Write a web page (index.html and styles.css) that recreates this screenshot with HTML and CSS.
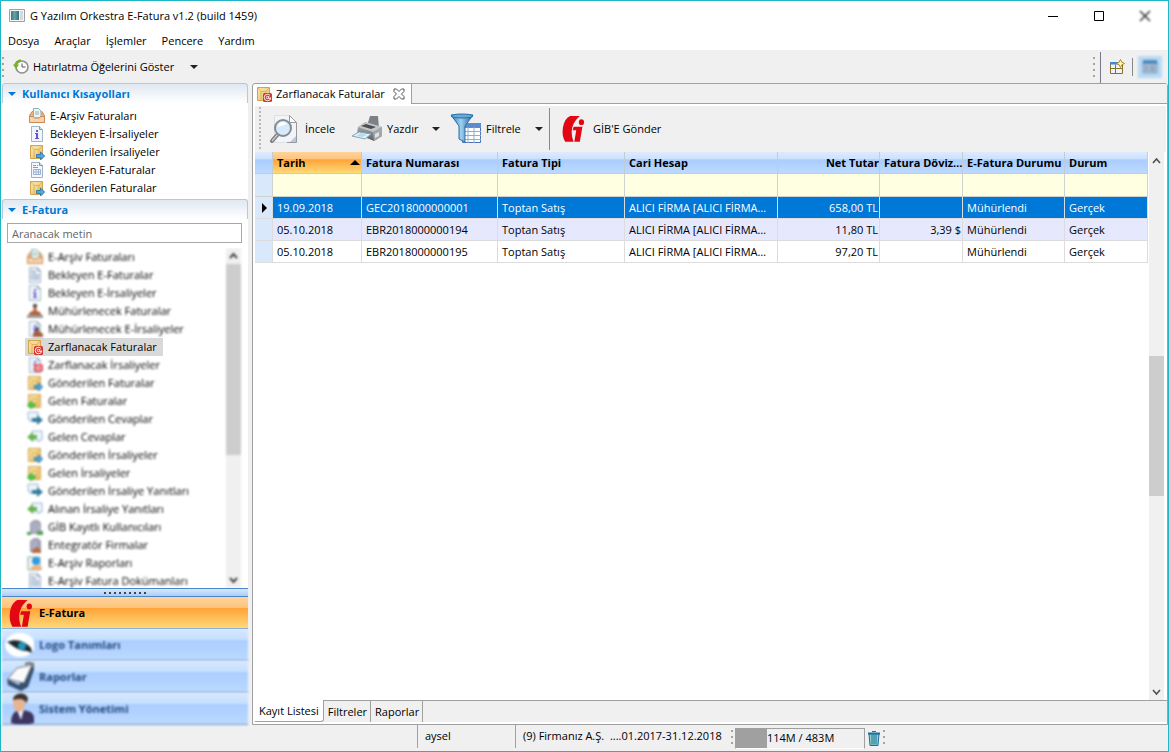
FILE: index.html
```html
<!DOCTYPE html>
<html lang="tr">
<head>
<meta charset="utf-8">
<title>G Yazılım Orkestra E-Fatura v1.2 (build 1459)</title>
<link rel="stylesheet" href="styles.css">
</head>
<body>
<svg class="defs" aria-hidden="true">
  <defs>
    <linearGradient id="gold" x1="0" y1="0" x2="1" y2="1"><stop offset="0" stop-color="#fbe7a8"/><stop offset="1" stop-color="#e8c068"/></linearGradient>
    <linearGradient id="funnel" x1="0" y1="0" x2="1" y2="0"><stop offset="0" stop-color="#2f78b8"/><stop offset=".45" stop-color="#9fd0ee"/><stop offset="1" stop-color="#1d5f9f"/></linearGradient>
    <linearGradient id="steel" x1="0" y1="0" x2="0" y2="1"><stop offset="0" stop-color="#b9bcc0"/><stop offset="1" stop-color="#5c6066"/></linearGradient>
    <symbol id="box" viewBox="0 0 16 16"><path d="M.5 7.500 3 3.500h10l2.500 4v7H.5z" fill="#e9b182" stroke="#c98a58"/><path d="M4.500.5h5l2.500 2.500V10H4.500z" fill="#eef6f4" stroke="#8fb0ae"/><path d="M6 4h4M6 6h4" stroke="#8fb0ae"/><path d="M.5 8.500h4L5.500 10h5l1-1.500h4v6H.5z" fill="#f6d3ac" stroke="#c98a58"/></symbol>
    <symbol id="info" viewBox="0 0 16 16"><path d="M2.500.5h8l3 3v12h-11z" fill="#f0f6fb" stroke="#9fb8c2"/><path d="M10.500.5v3h3" fill="#c9dfe6" stroke="#7f9fae"/><path d="M7 4h2v2H7zM6 7h3v5h1v1H6v-1h1V8H6z" fill="#6650d0"/></symbol>
    <symbol id="form" viewBox="0 0 16 16"><path d="M2.500.5h8l3 3v12h-11z" fill="#f4f8fc" stroke="#9fb0c6"/><path d="M10.500.5v3h3" fill="#d5e0ee" stroke="#7f93b0"/><path d="M4 3.500h3M8 3.500h1M4 5.500h5" stroke="#8599b8"/><path d="M4.500 7.500h7v5h-7zM4.500 10h7M7 7.500v5M9.500 7.500v5" fill="none" stroke="#9db2d0"/></symbol>
    <symbol id="env" viewBox="0 0 16 16"><path d="M1.500 1.500h12v13h-12z" fill="url(#gold)" stroke="#d3a450"/><path d="M1.500 1.500 5 5.500h5l3.500-4M5 5.500V14M10 5.500V14" fill="none" stroke="#cfa04a" stroke-width=".6"/></symbol>
    <symbol id="envout" viewBox="0 0 16 16"><use href="#env"/><path d="M7.500 10.500h4V8l4.200 4-4.200 4v-2.500h-4z" fill="#4ba9e4" stroke="#1d6faa" stroke-width=".8"/></symbol>
    <symbol id="envin" viewBox="0 0 16 16"><use href="#env"/><path d="M8 10.500H4.500V8L.3 12l4.200 4v-2.500H8z" fill="#45cf45" stroke="#2c9a2c" stroke-width=".6"/></symbol>
    <symbol id="envat" viewBox="0 0 16 16"><use href="#env"/><rect x="7" y="7" width="9" height="9" rx="1.500" fill="#d9342c"/><circle cx="11.500" cy="11.500" r="3.300" fill="none" stroke="#fff" stroke-width=".9" stroke-dasharray="18 3"/><circle cx="11.500" cy="11.500" r="1.200" fill="none" stroke="#fff" stroke-width=".9"/><path d="M12.800 10v2.500h1.500" fill="none" stroke="#fff" stroke-width=".8"/></symbol>
    <symbol id="stamp" viewBox="0 0 16 16"><path d="M6 1h4v3l-1 3 5 3v2H2v-2l5-3-1-3z" fill="#b5623b"/><path d="M6 1h4v3H6z" fill="#555"/><path d="M0 12h16v3H0z" fill="#9a9a9a"/></symbol>
    <symbol id="docstamp" viewBox="0 0 16 16"><use href="#info"/><path d="M9 6h3v4l4 3v3H6v-3l3-3z" fill="#a5603f"/><path d="M9 6h3v3H9z" fill="#555"/></symbol>
    <symbol id="docat" viewBox="0 0 16 16"><use href="#info"/><rect x="7" y="7" width="9" height="8" rx="2" fill="#e2555c"/><circle cx="11.500" cy="11" r="2" fill="none" stroke="#fff"/></symbol>
    <symbol id="replyout" viewBox="0 0 16 16"><path d="M1 1h10v7H5l-2 3V8H1z" fill="#eef5fb" stroke="#9bbad6"/><path d="M5 7h5V4l6 5-6 5v-3H5z" fill="#347c9c"/></symbol>
    <symbol id="replyin" viewBox="0 0 16 16"><path d="M5 2h10v9h-3v2l-2-2H5z" fill="#eef5fb" stroke="#9bbad6"/><path d="M10 6H6V3L0 8l6 5v-3h4z" fill="#66b34e"/></symbol>
    <symbol id="city" viewBox="0 0 16 16"><path d="M3 15V4l4-3h4l3 3v11z" fill="#9f9fb5"/><path d="M6 4v10M9 3v11M12 5v9" stroke="#c9c9d8"/><path d="M0 13h4v3H0zM10 12h6v4h-6z" fill="#58a058"/></symbol>
    <symbol id="firm" viewBox="0 0 16 16"><path d="M3 15V4l4-3h4l3 3v11z" fill="#9f9fb5"/><path d="M6 4v10M9 3v11" stroke="#c9c9d8"/><path d="M5 16v-3l5-3 4 3v3z" fill="#b56b45"/></symbol>
    <symbol id="report" viewBox="0 0 16 16"><path d="M1 2h12v13H1z" fill="#eef5f2" stroke="#87a79d"/><circle cx="9" cy="6" r="4" fill="#2f9be0"/><path d="M4 15v-3l5-2 6 2v3z" fill="#eeb37d"/></symbol>
    <symbol id="gib" viewBox="0 0 66 80"><path d="M24 0h30C38 14 30 30 29 48c0 12 2 22 6 31H9C2 68-1 52 2 35 5 18 12 6 24 0z" fill="#e30613"/><path d="M35 33h27l-8 46H37l6-35H32z" fill="#e30613"/><ellipse cx="59" cy="19" rx="8" ry="9" fill="#e30613"/></symbol>
  </defs>
</svg>
<div class="window">
  <header class="titlebar">
    <svg class="i16" viewBox="0 0 16 16"><path d="M.5 1.500h15v12H.5z" fill="#f4f6f8" stroke="#9aa0a5"/><path d="M2 3h8v9H2z" fill="url(#funnel)"/><path d="M2 3h8v9H2z" fill="#3c8064" opacity=".55"/><path d="M11 3h3v9h-3z" fill="#d6d9dc"/></svg>
    <h1>G Yazılım Orkestra E-Fatura v1.2 (build 1459)</h1>
    <div class="winbtns">
      <button aria-label="Simge durumuna küçült"><svg viewBox="0 0 12 12"><path d="M1 6.500h10" stroke="#000"/></svg></button>
      <button aria-label="Ekranı kapla"><svg viewBox="0 0 12 12"><path d="M1.500 1.500h9v9h-9z" fill="none" stroke="#000"/></svg></button>
      <button class="soft" aria-label="Kapat"><svg viewBox="0 0 12 12"><path d="m1 1 10 10M11 1 1 11" stroke="#333" stroke-width="1.500"/></svg></button>
    </div>
  </header>
  <nav class="menubar"><button>Dosya</button><button>Araçlar</button><button>İşlemler</button><button>Pencere</button><button>Yardım</button></nav>
  <div class="coolbar">
    <span class="grip"></span>
    <button class="remind">
      <svg class="i16" viewBox="0 0 16 16"><circle cx="9" cy="8" r="6" fill="#fbfbfb" stroke="#8d8d8d" stroke-width="1.600"/><path d="M9 4.500V8h3.500" fill="none" stroke="#555"/><path d="M8 1.200A7 7 0 0 0 2 7" fill="none" stroke="#74b51c" stroke-width="2"/><path d="M0 5.500h6L3 10z" fill="#74b51c"/></svg>
      Hatırlatma Öğelerini Göster <span class="caret"></span>
    </button>
    <div class="perspectives">
      <span class="grip"></span><span class="edge"></span>
      <button aria-label="Perspektif aç"><svg class="i16" viewBox="0 0 16 16"><path d="M1.500 3.500h12v11h-12z" fill="#eef3fb" stroke="#85702e"/><path d="M1 3h9v2.500H1z" fill="#4a86cc"/><path d="M1.500 9.500h12M6.500 5.500v9" stroke="#85702e"/><path d="m11.500.5 1.300 2.700 2.700 1.300-2.700 1.300-1.300 2.700-1.300-2.700-2.700-1.300 2.700-1.300z" fill="#fff5bf" stroke="#b08a24"/></svg></button>
      <span class="bar"></span>
      <button class="active soft" aria-label="E-Fatura perspektifi"><svg class="i16" viewBox="0 0 16 16"><path d="M1 2h14v12H1z" fill="#a9bdd2" stroke="#7f9dbd"/><path d="M1 1h14v4H1z" fill="#4f8abc"/><path d="M3 8h3M3 11h3M8 8h5M8 11h5" stroke="#7d96b2" stroke-width="1.500"/></svg></button>
    </div>
  </div>
  <div class="work">
    <aside class="side">
      <section>
        <h2><span class="twist"></span>Kullanıcı Kısayolları</h2>
        <ul class="short">
          <li><svg class="i16"><use href="#box"/></svg>E-Arşiv Faturaları</li>
          <li><svg class="i16"><use href="#info"/></svg>Bekleyen E-İrsaliyeler</li>
          <li><svg class="i16"><use href="#envout"/></svg>Gönderilen İrsaliyeler</li>
          <li><svg class="i16"><use href="#form"/></svg>Bekleyen E-Faturalar</li>
          <li><svg class="i16"><use href="#envout"/></svg>Gönderilen Faturalar</li>
        </ul>
      </section>
      <section class="tree-section">
        <h2><span class="twist"></span>E-Fatura</h2>
        <input class="search" type="text" placeholder="Aranacak metin" aria-label="Aranacak metin">
        <div class="treewrap">
          <ul class="tree">
            <li><svg class="i16"><use href="#box"/></svg><span>E-Arşiv Faturaları</span></li>
            <li><svg class="i16"><use href="#form"/></svg><span>Bekleyen E-Faturalar</span></li>
            <li><svg class="i16"><use href="#info"/></svg><span>Bekleyen E-İrsaliyeler</span></li>
            <li><svg class="i16"><use href="#stamp"/></svg><span>Mühürlenecek Faturalar</span></li>
            <li><svg class="i16"><use href="#docstamp"/></svg><span>Mühürlenecek E-İrsaliyeler</span></li>
            <li class="selected"><svg class="i16"><use href="#envat"/></svg><span>Zarflanacak Faturalar</span></li>
            <li><svg class="i16"><use href="#docat"/></svg><span>Zarflanacak İrsaliyeler</span></li>
            <li><svg class="i16"><use href="#envout"/></svg><span>Gönderilen Faturalar</span></li>
            <li><svg class="i16"><use href="#envin"/></svg><span>Gelen Faturalar</span></li>
            <li><svg class="i16"><use href="#replyout"/></svg><span>Gönderilen Cevaplar</span></li>
            <li><svg class="i16"><use href="#replyin"/></svg><span>Gelen Cevaplar</span></li>
            <li><svg class="i16"><use href="#envout"/></svg><span>Gönderilen İrsaliyeler</span></li>
            <li><svg class="i16"><use href="#envin"/></svg><span>Gelen İrsaliyeler</span></li>
            <li><svg class="i16"><use href="#replyout"/></svg><span>Gönderilen İrsaliye Yanıtları</span></li>
            <li><svg class="i16"><use href="#replyin"/></svg><span>Alınan İrsaliye Yanıtları</span></li>
            <li><svg class="i16"><use href="#city"/></svg><span>GİB Kayıtlı Kullanıcıları</span></li>
            <li><svg class="i16"><use href="#firm"/></svg><span>Entegratör Firmalar</span></li>
            <li><svg class="i16"><use href="#report"/></svg><span>E-Arşiv Raporları</span></li>
            <li><svg class="i16"><use href="#form"/></svg><span>E-Arşiv Fatura Dokümanları</span></li>
          </ul>
          <div class="scroll soft">
            <svg viewBox="0 0 15 16"><path d="m4 10 3.500-4L11 10" fill="none" stroke="#444" stroke-width="2"/></svg>
            <div class="track"><div class="thumb side-thumb"></div></div>
            <svg viewBox="0 0 15 16"><path d="m4 6 3.500 4L11 6" fill="none" stroke="#444" stroke-width="2"/></svg>
          </div>
        </div>
      </section>
      <div class="sash"><i></i><i></i><i></i><i></i><i></i><i></i><i></i><i></i><i></i></div>
      <nav class="modules">
        <button class="current"><svg class="i32" viewBox="0 0 32 32"><use href="#gib" x="7" y="3" width="23" height="27"/></svg>E-Fatura</button>
        <button class="other"><svg class="i32" viewBox="0 0 32 32"><ellipse cx="18" cy="16" rx="15" ry="12" fill="#fff"/><path d="M5 13c9-4 18-1 24 6l1 5-5-2c-8 0-11-3-20-9z" fill="#1b2730"/><circle cx="20" cy="17" r="4" fill="#2196b8"/></svg>Logo Tanımları</button>
        <button class="other"><svg class="i32" viewBox="0 0 32 32"><path d="m5 18 12 6L28 5l5 1-7 20-7 4L6 24z" fill="#35506f"/><path d="M15 7l15-3-8 18-16-4z" fill="#fafafa" stroke="#777"/><path d="m23 3 4-1 5 1-1 4" fill="none" stroke="#666" stroke-width="2"/></svg>Raporlar</button>
        <button class="other"><svg class="i32" viewBox="0 0 32 32"><path d="M9 30c0-9 4-13 10-13s13 2 13 8v5c-8 2-16 2-23 0z" fill="#3c3660"/><path d="m15 17 4 10 3-11z" fill="#eef"/><ellipse cx="17" cy="10" rx="6" ry="9" fill="#e8b490"/><path d="M11 7c0-8 14-9 15-1l-2 5c0-5-6-6-13-4z" fill="#3a332e"/></svg>Sistem Yönetimi</button>
      </nav>
    </aside>
    <main class="editor">
      <div class="tabs">
        <div class="tab"><svg class="i16"><use href="#envat"/></svg><span>Zarflanacak Faturalar</span>
          <button aria-label="Sekmeyi kapat"><svg viewBox="0 0 12 12"><path d="M1 1h2.500L6 3.500 8.500 1H11v2.500L8.500 6 11 8.500V11H8.500L6 8.500 3.500 11H1V8.500L3.500 6 1 3.500z" fill="#fff" stroke="#555"/></svg></button></div>
        <div class="tabrest"></div>
      </div>
      <div class="toolbar">
        <span class="grip tall"></span>
        <button class="t-view"><svg class="i32" viewBox="0 0 32 32"><path d="M5.500 2.500h15l7 7v20h-22z" fill="#f2f4f8" stroke="#dcdfe3"/><path d="M27.500 9.500v20H18" fill="none" stroke="#999"/><path d="M20.500 2.500v7h7z" fill="#fff" stroke="#999"/><path d="m27 23-6 6h6z" fill="#b5c5f5"/><path d="M9 21 3 28" stroke="#777" stroke-width="4" stroke-linecap="round"/><path d="M9 21 3 28" stroke="#ccc" stroke-width="1.500"/><circle cx="14" cy="15" r="8" fill="#d5ebfb" stroke="#858b93" stroke-width="2"/><path d="M9 14a5 5 0 0 1 9-3z" fill="#fff"/></svg>İncele</button>
        <button class="t-print"><svg class="i32" viewBox="0 0 32 32"><path d="m16 13 3-10h8l1 12z" fill="#7d8186"/><path d="m7 14 7-5 17 5v9l-8 5L6 21z" fill="url(#steel)"/><path d="m7 14 7-5 17 5-9 5z" fill="#c4c7ca"/><path d="m10 13 5-2 10 3-5 2z" fill="#4c4f54"/><path d="m22 19 9-5v9l-8 5z" fill="#a3a7ab"/><path d="m24 21 4-2v4l-4 2z" fill="#dfe2e5"/><path d="m1 23 7-4 12 2-6 5z" fill="#e2f3fb" stroke="#8aa3b0"/><path d="m5 23 5-3 6 2-4 2z" fill="#b4dcee"/></svg>Yazdır</button>
        <button class="drop" aria-label="Yazdır seçenekleri"><span class="caret"></span></button>
        <button class="t-filter"><svg class="i32" viewBox="0 0 32 32"><path d="M12.500 10.500h18v19h-18z" fill="#fff" stroke="#4d74b8"/><path d="M12 10h19v5H12z" fill="#5c8bd0"/><path d="M12 18.500h19M12 22.500h19M12 26.500h19M18 14v16M24 14v16" stroke="#8fabd6"/><path d="M1 2h22l-8 11v16l-6-3V13z" fill="url(#funnel)" stroke="#286fa8"/><ellipse cx="12" cy="3" rx="11" ry="2" fill="#68a9d6" stroke="#286fa8"/></svg>Filtrele</button>
        <button class="drop" aria-label="Filtre seçenekleri"><span class="caret"></span></button>
        <span class="bar"></span>
        <button class="t-send"><svg class="i32" viewBox="0 0 32 32"><use href="#gib" x="4" y="3" width="24" height="26"/></svg>GİB'E Gönder</button>
      </div>
      <div class="gridarea">
        <div class="tablewrap">
          <table>
            <colgroup><col class="c0"><col class="c1"><col class="c2"><col class="c3"><col class="c4"><col class="c5"><col class="c6"><col class="c7"><col></colgroup>
            <thead>
              <tr><th></th><th class="sorted"><div>Tarih<span class="up"></span></div></th><th>Fatura Numarası</th><th>Fatura Tipi</th><th>Cari Hesap</th><th class="num">Net Tutar</th><th>Fatura Döviz…</th><th>E-Fatura Durumu</th><th>Durum</th></tr>
              <tr class="filter"><td class="rowhead"></td><td><input aria-label="Tarih"></td><td><input aria-label="Fatura Numarası"></td><td><input aria-label="Fatura Tipi"></td><td><input aria-label="Cari Hesap"></td><td><input aria-label="Net Tutar"></td><td><input aria-label="Fatura Döviz"></td><td><input aria-label="E-Fatura Durumu"></td><td><input aria-label="Durum"></td></tr>
            </thead>
            <tbody>
              <tr class="sel"><td class="rowhead"><span class="pointer"></span></td><td>19.09.2018</td><td>GEC2018000000001</td><td>Toptan Satış</td><td>ALICI FİRMA [ALICI FİRMA…</td><td class="num">658,00 TL</td><td class="num"></td><td>Mühürlendi</td><td>Gerçek</td></tr>
              <tr class="alt"><td class="rowhead"></td><td>05.10.2018</td><td>EBR2018000000194</td><td>Toptan Satış</td><td>ALICI FİRMA [ALICI FİRMA…</td><td class="num">11,80 TL</td><td class="num">3,39 $</td><td>Mühürlendi</td><td>Gerçek</td></tr>
              <tr><td class="rowhead"></td><td>05.10.2018</td><td>EBR2018000000195</td><td>Toptan Satış</td><td>ALICI FİRMA [ALICI FİRMA…</td><td class="num">97,20 TL</td><td class="num"></td><td>Mühürlendi</td><td>Gerçek</td></tr>
            </tbody>
          </table>
        </div>
        <div class="scroll">
          <svg viewBox="0 0 15 16"><path d="m4 11 3.500-4 3.500 4" fill="none" stroke="#505050" stroke-width="1.600"/></svg>
          <div class="track low"><div class="thumb main-thumb"></div></div>
          <svg viewBox="0 0 15 16"><path d="m4 6 3.500 4L11 6" fill="none" stroke="#505050" stroke-width="1.600"/></svg>
        </div>
      </div>
      <div class="pages"><button class="on">Kayıt Listesi</button><button>Filtreler</button><button>Raporlar</button><span></span></div>
    </main>
  </div>
  <footer class="status">
    <span class="user">aysel</span>
    <span class="firm">(9) Firmanız A.Ş. &nbsp;....01.2017-31.12.2018</span>
    <span class="grip"></span>
    <div class="heap"><span>114M / 483M</span></div>
    <button class="trash" aria-label="Belleği temizle"><svg class="i16" viewBox="0 0 16 16"><path d="M3 4h10l-1 11.500H4z" fill="#8fd0c8" stroke="#1c6ea0"/><path d="M6 5v9.500M8 5v9.500M10 5v9.500" stroke="#1c6ea0"/><path d="M2 3.500h12" stroke="#1c6ea0" stroke-width="2"/><path d="M6 1.500h4" stroke="#1c6ea0"/></svg></button>
    <span class="grip"></span>
  </footer>
</div>
</body>
</html>
```
FILE: styles.css
```css
* { box-sizing: border-box; }
body { margin: 0; font: 11px/18px "Open Sans", "Noto Sans", sans-serif; color: #000; }
button, input { font: inherit; color: inherit; }
button { margin: 0; padding: 0; border: 0; background: none; display: flex; align-items: center; white-space: nowrap; }
ul { list-style: none; margin: 0; padding: 0; }
h1, h2 { margin: 0; font-size: inherit; font-weight: 400; }
svg { flex: none; display: block; }
.defs { position: absolute; width: 0; height: 0; }
.i16 { width: 16px; height: 16px; }
.i32 { width: 32px; height: 32px; }
.soft { filter: blur(1px); }

.window { height: 100vh; display: flex; flex-direction: column; background: #f0f0f0; border: 1px solid #1eb5c4; }
.titlebar { height: 30px; flex: none; display: flex; align-items: center; gap: 5px; padding-left: 8px; background: #fff; }
.titlebar h1 { flex: 1; }
.winbtns { display: flex; }
.winbtns button { width: 46px; height: 28px; justify-content: center; }
.winbtns svg { width: 12px; height: 12px; }
.menubar { height: 19px; flex: none; display: flex; gap: 15px; padding-left: 7px; background: #fff; }
.coolbar { height: 33px; flex: none; display: flex; align-items: center; padding-left: 1px; }
.grip { width: 2px; height: 20px; flex: none; background: repeating-linear-gradient(#a5a59c 0 2px, transparent 2px 6px); }
.grip.tall { height: 44px; background: repeating-linear-gradient(#b8b8b8 0 2px, transparent 2px 4px); }
.caret { width: 0; height: 0; border: 4px solid transparent; border-top-color: #222; border-bottom: 0; }
.remind { margin-left: 9px; gap: 4px; }
.remind .caret { margin-left: 12px; }
.perspectives { margin-left: auto; display: flex; align-items: center; align-self: stretch; }
.perspectives .edge { width: 1px; align-self: stretch; margin: 2px 8px 0 5px; background: #77778c; }
.perspectives .bar { width: 1px; height: 18px; margin: 0 5px 0 7px; background: #888; }
.perspectives .active { width: 24px; height: 22px; justify-content: center; background: #b8daf5; margin-right: 6px; }

.work { flex: 1; min-height: 0; display: flex; gap: 4px; }
.side { width: 247px; flex: none; padding-left: 1px; display: flex; flex-direction: column; background: #fff; }
.side h2 { height: 20px; flex: none; display: flex; align-items: center; gap: 6px; padding-left: 5px; font-weight: 700; color: #0078d7; border: 1px solid #b4c8e0; border-bottom: 0; border-radius: 3px 3px 0 0; background: linear-gradient(#e0e8f2, #fff); }
.twist { width: 0; height: 0; border: 4px solid transparent; border-top-color: #0078d7; border-bottom: 0; }
.side li { height: 18px; display: flex; align-items: center; white-space: nowrap; }
.short { padding: 4px 0 2px 27px; }
.short li { gap: 5px; }
.tree-section { flex: 1; min-height: 0; display: flex; flex-direction: column; }
.search { height: 20px; flex: none; margin: 4px 6px 5px 5px; padding: 0 4px; border: 1px solid #a8a8a8; background: #fff; }
.search::placeholder { color: #666; opacity: 1; }
.treewrap { flex: 1; min-height: 0; display: flex; justify-content: space-between; padding-right: 7px; overflow: hidden; }
.tree { padding-left: 23px; overflow: hidden; }
.tree li { gap: 5px; width: max-content; padding: 0 6px 0 2px; }
.tree li:not(.selected) { filter: blur(1px); }
.tree .selected { background: #d9d9d9; }
.scroll { width: 15px; flex: none; display: flex; flex-direction: column; background: #f0f0f0; }
.scroll svg { width: 15px; height: 16px; }
.track { flex: 1; }
.thumb { background: #cdcdcd; }
.side-thumb { height: 62%; }
.low { display: flex; flex-direction: column; justify-content: flex-end; padding-bottom: 188px; }
.main-thumb { height: 140px; }
.sash { height: 9px; flex: none; display: flex; gap: 3px; justify-content: center; align-items: center; border: 1px solid #4a86c8; border-width: 1px 0; background: linear-gradient(#d8e8fc, #a9cdfb); }
.sash i { width: 2px; height: 2px; background: #444; }
.modules { background: #f0f0f0; }
.modules button { width: 100%; height: 32px; gap: 5px; font-weight: 700; border-bottom: 1px solid #6a97cf; overflow: hidden; }
.modules .current { background: linear-gradient(#ffd49c 0, #ffc27a 35%, #ffa338 36%, #ffd978 100%); }
.modules .other { color: #274a80; background: linear-gradient(#d6e8ff 0, #c6dfff 35%, #aaceff 36%, #bcd9ff 100%); filter: blur(1px); }

.editor { flex: 1; min-width: 0; display: flex; flex-direction: column; border: 1px solid #a0a0a0; border-radius: 3px 3px 0 0; background: #fff; padding: 0 1px 1px 2px; }
.tabs { height: 20px; flex: none; display: flex; margin: 0 -1px 0 -2px; }
.tab { display: flex; align-items: center; gap: 4px; padding: 0 6px 0 3px; border-right: 1px solid #a0a0a0; }
.tab button { margin-left: 4px; }
.tab button svg { width: 12px; height: 12px; }
.tabrest { flex: 1; background: #f0f0f0; border-bottom: 1px solid #a0a0a0; }
.toolbar { height: 46px; flex: none; margin-top: 2px; display: flex; align-items: center; background: #f0f0f0; padding-left: 4px; }
.toolbar button { gap: 4px; }
.toolbar .t-view { margin-left: 8px; width: 82px; }
.toolbar .t-print { width: 74px; }
.toolbar .drop { width: 21px; justify-content: center; }
.toolbar .t-filter { width: 82px; }
.toolbar .drop + .t-filter { margin-left: 4px; width: 78px; }
.toolbar .drop + .bar { margin-left: 0; }
.toolbar .bar { width: 1px; height: 42px; background: #888; }
.toolbar .t-send { margin-left: 7px; }
.gridarea { flex: 1; min-height: 0; display: flex; padding-right: 2px; }
.tablewrap { flex: 1; min-width: 0; padding-right: 1px; }
table { width: 100%; table-layout: fixed; border-collapse: separate; border-spacing: 0; }
.c0 { width: 18px; } .c1 { width: 89px; } .c2 { width: 136px; } .c3 { width: 127px; } .c4 { width: 153px; }
.c5 { width: 102px; } .c6 { width: 83px; } .c7 { width: 102px; }
th, td { height: 22px; padding: 0 0 0 4px; white-space: nowrap; text-align: left; border-right: 1px solid #dcdcdc; border-bottom: 1px solid #dcdcdc; }
th { font-weight: 700; border-color: #c0ccd8; background: linear-gradient(#dcebff 0, #cbe1ff 35%, #aacdff 36%, #bddaff 100%); }
th.sorted { background: linear-gradient(#ffd49c 0, #ffc27a 35%, #ffa338 36%, #ffd978 100%); }
.sorted div { display: flex; justify-content: space-between; align-items: center; padding-right: 1px; }
.up { width: 0; height: 0; border: 5px solid transparent; border-bottom-color: #000; border-top: 0; }
.num { text-align: right; }
td.num { padding-right: 1px; }
.filter td { height: 23px; padding: 0; background: #ffffe1; border-color: #cfd3d0; }
.filter input { display: block; width: 100%; height: 22px; padding: 0 4px; border: 0; background: none; }
.sel td { background: #0078d7; color: #fff; }
.alt td { background: #e6e9fd; }
td.rowhead, .filter .rowhead { background: #d9e8fb; padding: 0 0 0 7px; }
.pointer { display: block; width: 0; height: 0; border: 5px solid transparent; border-left-color: #000; border-right: 0; }
.pages { height: 23px; flex: none; display: flex; margin: 0 -1px 0 -2px; padding: 0 0 1px 2px; }
.pages button { padding: 0 4px; background: #f0f0f0; border: solid #a0a0a0; border-width: 1px 1px 0 0; }
.pages button:not(.on) { padding: 0 3px 0 4px; }
.pages .on { background: #fff; border-width: 0 1px 1px 0; border-radius: 0 0 3px 0; }
.pages span { flex: 1; border-top: 1px solid #a0a0a0; background: #f0f0f0; }

.status { height: 26px; flex: none; display: flex; align-items: center; padding-left: 416px; white-space: nowrap; }
.status .user, .status .firm { height: 23px; align-self: flex-start; padding-left: 7px; line-height: 22px; border-left: 1px solid #a0a0a0; }
.status .user { width: 98px; }
.status .firm { width: 216px; }
.status .grip { height: 16px; margin-right: 2px; }
.heap { width: 130px; height: 21px; padding-left: 31px; border: 1px solid #a0a0a0; border-bottom-color: #fff; background: linear-gradient(90deg, #a0a0a0 31px, #f0f0f0 31px); line-height: 18px; }
.trash { width: 17px; height: 21px; margin-right: 1px; justify-content: center; }
```
